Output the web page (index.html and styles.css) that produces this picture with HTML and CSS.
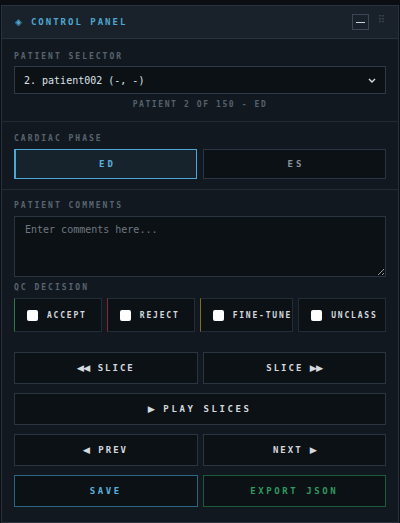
FILE: index.html
```html
<!DOCTYPE html>
<html>
<head>
<meta charset="utf-8">
<link rel="stylesheet" href="styles.css">
</head>
<body>
<div class="panel">
  <div class="header">
    <div class="title"><span class="title-icon">◈</span>CONTROL PANEL</div>
    <div class="header-tools">
      <div class="min-btn"><span class="min-line"></span></div>
      <div class="grip">⠿</div>
    </div>
  </div>

  <div class="section s1">
    <div class="label">PATIENT SELECTOR</div>
    <div class="select">
      <span>2. patient002 (-, -)</span>
      <svg width="8" height="5" viewBox="0 0 8 5"><path d="M1 1 L4 4 L7 1" fill="none" stroke="#d8dde2" stroke-width="1.4"/></svg>
    </div>
    <div class="caption">PATIENT 2 OF 150 - ED</div>
  </div>

  <div class="section s2">
    <div class="label">CARDIAC PHASE</div>
    <div class="phase-row">
      <div class="phase active">ED</div>
      <div class="phase">ES</div>
    </div>
  </div>

  <div class="section s3">
    <div class="label">PATIENT COMMENTS</div>
    <textarea class="comments" placeholder="Enter comments here..."></textarea>
    <div class="label qc-label">QC DECISION</div>
    <div class="qc-row">
      <label class="qc accept"><span class="box"></span>ACCEPT</label>
      <label class="qc reject"><span class="box"></span>REJECT</label>
      <label class="qc fine"><span class="box"></span>FINE-TUNE</label>
      <label class="qc unclass"><span class="box"></span>UNCLASS</label>
    </div>

    <div class="btn-grid">
      <div class="btn"><span class="tri">◀◀</span>SLICE</div>
      <div class="btn">SLICE<span class="tri after">▶▶</span></div>
      <div class="btn wide"><span class="tri">▶</span>PLAY SLICES</div>
      <div class="btn"><span class="tri">◀</span>PREV</div>
      <div class="btn">NEXT<span class="tri after">▶</span></div>
      <div class="btn save">SAVE</div>
      <div class="btn export">EXPORT JSON</div>
    </div>
  </div>
</div>
</body>
</html>
```

FILE: styles.css
```css
* { box-sizing: border-box; }
html, body { margin: 0; padding: 0; }
body {
  background: #0a0e13;
  font-family: "DejaVu Sans Mono", "Liberation Mono", monospace;
  width: 400px;
  height: 523px;
  overflow: hidden;
}
.panel {
  margin: 5px 0 0 1px;
  width: 398px;
  height: 518px;
  background: #111820;
  border: 1px solid #27323e;
  display: flex;
  flex-direction: column;
}
.header {
  height: 33px;
  background: #19222b;
  border-bottom: 1px solid #27323e;
  display: flex;
  align-items: center;
  justify-content: space-between;
  padding: 0 13px 0 13px;
}
.title {
  color: #4fa6d2;
  font-size: 9px;
  font-weight: bold;
  letter-spacing: 2px;
  display: flex;
  align-items: center;
}
.title-icon {
  font-family: "DejaVu Sans", sans-serif;
  font-size: 9px;
  margin-right: 9px;
  letter-spacing: 0;
}
.header-tools {
  display: flex;
  align-items: center;
  gap: 9px;
}
.min-btn {
  width: 17px;
  height: 16px;
  border: 1px solid #3a4654;
  display: flex;
  align-items: center;
  justify-content: center;
}
.min-line {
  width: 9px;
  height: 1px;
  background: #c8d0d8;
}
.grip {
  color: #3e4a56;
  font-family: "DejaVu Sans", sans-serif;
  font-size: 10px;
  line-height: 10px;
  margin-top: -4px;
}
.section {
  padding: 12px 12px 0 12px;
}
.s1 {
  padding-top: 13px;
  padding-bottom: 11px;
  border-bottom: 1px solid #212b35;
}
.s2 {
  padding-bottom: 10px;
  border-bottom: 1px solid #212b35;
}
.s3 { padding-top: 11px; }
.label {
  font-size: 8px;
  line-height: 10px;
  height: 10px;
  letter-spacing: 2px;
  color: #59646f;
  font-weight: bold;
  margin-bottom: 5px;
}
.s1 .label { margin-bottom: 4px; }
.select {
  height: 28px;
  background: #0c1116;
  border: 1px solid #2d3946;
  display: flex;
  align-items: center;
  justify-content: space-between;
  padding: 0 9px 0 9px;
  color: #dde2e7;
  font-size: 10px;
}
.caption {
  margin-top: 6px;
  text-align: center;
  font-size: 8px;
  line-height: 10px;
  letter-spacing: 1.6px;
  color: #56616c;
  font-weight: bold;
}
.phase-row {
  display: grid;
  grid-template-columns: 1fr 1fr;
  gap: 6px;
}
.phase {
  height: 30px;
  background: #0c1116;
  border: 1px solid #2a3541;
  display: flex;
  align-items: center;
  justify-content: center;
  font-size: 9px;
  font-weight: bold;
  letter-spacing: 3px;
  color: #8a949e;
  padding-left: 3px;
}
.phase.active {
  background: #16222c;
  border: 1px solid #4fa6d2;
  border-left-width: 2px;
  color: #5ab0dc;
}
.comments {
  display: block;
  width: 100%;
  height: 61px;
  margin: 0;
  background: #0c1116;
  border: 1px solid #2a3541;
  border-radius: 0;
  padding: 7px 10px;
  color: #dde2e7;
  font-family: "DejaVu Sans Mono", "Liberation Mono", monospace;
  font-size: 10px;
  resize: both;
  outline: none;
}
.comments::placeholder { color: #6f7882; }
.qc-label { margin-top: 6px; }
.qc-row {
  display: grid;
  grid-template-columns: repeat(4, 1fr);
  gap: 5px;
}
.qc {
  height: 34px;
  background: #0c1116;
  border: 1px solid #232d38;
  display: flex;
  align-items: center;
  padding-left: 12px;
  gap: 9px;
  font-size: 8px;
  font-weight: bold;
  letter-spacing: 1.8px;
  color: #d3d9de;
  white-space: nowrap;
}
.qc.accept { border-left-color: #2b7a47; }
.qc.reject { border-left-color: #8a2b2b; }
.qc.fine { border-left-color: #8c6a1c; }
.box {
  width: 11px;
  height: 11px;
  background: #ffffff;
  border-radius: 2px;
  flex: none;
}
.btn-grid {
  margin-top: 20px;
  display: grid;
  grid-template-columns: 1fr 1fr;
  column-gap: 5px;
  row-gap: 9px;
}
.btn {
  height: 32px;
  background: #0c1116;
  border: 1px solid #2a3541;
  display: flex;
  align-items: center;
  justify-content: center;
  font-size: 9px;
  font-weight: bold;
  letter-spacing: 2px;
  color: #d3d9de;
}
.tri {
  font-family: "DejaVu Sans", sans-serif;
  font-size: 9px;
  letter-spacing: -1px;
  margin-right: 9px;
  transform: scaleX(1.05);
}
.tri.after {
  margin-right: 0;
  margin-left: 7px;
}
.btn.wide {
  grid-column: 1 / span 2;
  letter-spacing: 2.6px;
}
.btn.save {
  border-color: #2a6584;
  color: #5ab0dc;
  letter-spacing: 2.6px;
}
.btn.export {
  border-color: #1f5a38;
  color: #2f9a5e;
  letter-spacing: 2.6px;
}
```
